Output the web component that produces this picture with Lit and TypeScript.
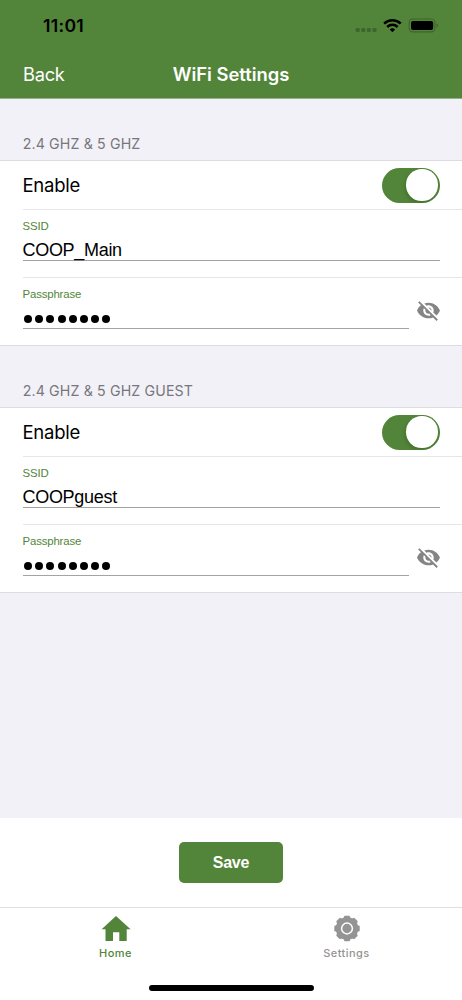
import { LitElement, html, svg, css } from "lit";
import { customElement, property } from "lit/decorators.js";

@customElement("wifi-group")
class WifiGroup extends LitElement {
  @property() heading = "";
  @property() ssid = "";

  static styles = css`
    :host { display: block; }
    .heading {
      box-sizing: border-box; height: 61px; padding: 34px 22.7px 0;
      font: 400 14.2px/22px Inter, sans-serif; letter-spacing: 0.13px; color: #77777c;
    }
    .card { background: #fff; border-top: 1px solid #dddde1; border-bottom: 1px solid #dddde1; padding-left: 22.5px; height: 184px; }
    .row { box-sizing: border-box; border-bottom: 1px solid #e6e6e8; padding-right: 22.5px; }
    .enable { height: 49px; display: flex; align-items: center; justify-content: space-between; }
    .name { font: 400 18.5px/24px Inter, sans-serif; letter-spacing: -0.25px; color: #000; }
    .toggle {
      box-sizing: border-box; width: 57.5px; height: 35px; border-radius: 18px; background: #528539;
      padding: 1.75px; display: flex; justify-content: flex-end; overflow: hidden;
    }
    .knob { width: 31.5px; height: 31.5px; border-radius: 50%; background: #fff; box-shadow: -1px 2px 4px rgba(0,0,0,.16); }
    .field { height: 68px; padding-top: 9px; display: flex; }
    .last { border-bottom: 0; }
    .input { flex: 1; height: 41px; border-bottom: 1px solid #a3a3a5; }
    .label { font: 400 11.4px/14px "Liberation Sans", Arial, sans-serif; letter-spacing: -0.15px; color: #528539; }
    .value { font: 400 18px/24px "Liberation Sans", Arial, sans-serif; letter-spacing: -0.3px; color: #000; margin-top: 5px; white-space: nowrap; }
    .dots { display: flex; gap: 3.1px; padding: 13.5px 0 0 1.5px; }
    .dot { width: 8.1px; height: 8.1px; border-radius: 50%; background: #000; }
    .eye { width: 31px; padding: 11.3px 0 0 7.1px; box-sizing: border-box; }
    .eye svg { display: block; width: 25px; height: 25px; }
  `;

  render() {
    return html`
      <div class="heading">${this.heading}</div>
      <div class="card">
        <div class="row enable">
          <span class="name">Enable</span>
          <div class="toggle"><div class="knob"></div></div>
        </div>
        <div class="row field">
          <div class="input">
            <div class="label">SSID</div>
            <div class="value">${this.ssid}</div>
          </div>
        </div>
        <div class="row field last">
          <div class="input">
            <div class="label">Passphrase</div>
            <div class="dots">${Array.from({ length: 8 }, () => html`<div class="dot"></div>`)}</div>
          </div>
          <div class="eye">
            <svg viewBox="0 0 24 24" fill="#858585"><path d="M12 7c2.76 0 5 2.24 5 5 0 .65-.13 1.26-.36 1.83l2.92 2.92c1.51-1.26 2.7-2.89 3.43-4.75-1.73-4.39-6-7.5-11-7.5-1.4 0-2.74.25-3.98.7l2.16 2.16C10.74 7.13 11.35 7 12 7zM2 4.27l2.28 2.28.46.46C3.08 8.3 1.78 10.02 1 12c1.73 4.39 6 7.5 11 7.5 1.55 0 3.03-.3 4.38-.84l.42.42L19.73 22 21 20.73 3.27 3 2 4.27zM7.53 9.8l1.55 1.55c-.05.21-.08.43-.08.65 0 1.66 1.34 3 3 3 .22 0 .44-.03.65-.08l1.55 1.55c-.67.33-1.41.53-2.2.53-2.76 0-5-2.24-5-5 0-.79.2-1.53.53-2.2zm4.31-.78l3.15 3.15.02-.16c0-1.66-1.34-3-3-3l-.17.01z"/></svg>
          </div>
        </div>
      </div>
    `;
  }
}

@customElement("app-root")
class AppRoot extends LitElement {
  static styles = css`
    :host { display: flex; flex-direction: column; width: 462px; height: 1000px; background: #f2f1f7; overflow: hidden; }
    .top { box-sizing: border-box; height: 99px; background: #528539; border-bottom: 1px solid #98ad90; }
    .status { box-sizing: border-box; height: 50px; display: flex; justify-content: space-between; padding: 14px 23px 0 43px; }
    .time { font: 600 17.6px/24px Inter, sans-serif; letter-spacing: 0.3px; color: #000; }
    .status svg { display: block; width: 84px; height: 24px; }
    .nav { height: 48px; display: grid; grid-template-columns: 1fr auto 1fr; align-items: center; padding: 0 23px; color: #fff; }
    .back { font: 400 18.3px/24px Inter, sans-serif; letter-spacing: -0.3px; }
    .title { font: 600 18.4px/24px Inter, sans-serif; }
    .body { flex: 1; }
    .footer { height: 89px; background: #fff; display: flex; align-items: center; justify-content: center; }
    .save {
      width: 104px; height: 41px; border: 0; border-radius: 5px; padding: 1px 0 0; background: #528539; color: #fff;
      font: 700 16px/40px "Liberation Sans", Arial, sans-serif; letter-spacing: -0.2px;
    }
    .tabs { box-sizing: border-box; height: 76px; background: #fff; border-top: 1px solid #dfdfe1; display: flex; }
    .tab { flex: 1; display: flex; flex-direction: column; align-items: center; padding-top: 7px; color: #949494; font: 500 11px/14px Inter, sans-serif; letter-spacing: .45px; }
    .tab svg { display: block; width: 30px; height: 28px; margin-bottom: 3px; }
    .active { color: #528539; }
    .bottom { height: 17px; background: #fff; display: flex; justify-content: center; padding-top: 2px; box-sizing: border-box; }
    .bar { width: 165px; height: 6px; border-radius: 3px; background: #000; }
  `;

  render() {
    return html`
      <div class="top">
        <div class="status">
          <span class="time">11:01</span>
          <svg viewBox="0 0 84 24">
            <g fill="#3e652b">
              <rect x="0.7" y="14" width="4" height="4" rx="1.2"/><rect x="6.3" y="14" width="4" height="4" rx="1.2"/>
              <rect x="11.9" y="14" width="4" height="4" rx="1.2"/><rect x="17.5" y="14" width="4" height="4" rx="1.2"/>
            </g>
            <g fill="none" stroke="#000" stroke-width="2.5">
              <path d="M29.1 9.6a11.8 11.8 0 0 1 16.6 0"/><path d="M32.2 13a7.4 7.4 0 0 1 10.4 0"/>
            </g>
            <path d="M37.4 18.2l-2.7-2.7a3.9 3.9 0 0 1 5.4 0z"/>
            <rect x="54.2" y="5" width="25.8" height="12.9" rx="3.6" fill="none" stroke="#3e652b" stroke-width="1.1"/>
            <rect x="56" y="6.9" width="22.2" height="9.1" rx="2"/>
            <path d="M81.5 9.3q3 2.2 0 4.4z" fill="#3e652b"/>
          </svg>
        </div>
        <div class="nav"><span class="back">Back</span><span class="title">WiFi Settings</span></div>
      </div>
      <div class="body">
        <wifi-group heading="2.4 GHZ &amp; 5 GHZ" ssid="COOP_Main"></wifi-group>
        <wifi-group heading="2.4 GHZ &amp; 5 GHZ GUEST" ssid="COOPguest"></wifi-group>
      </div>
      <div class="footer"><button class="save">Save</button></div>
      <div class="tabs">
        <div class="tab active">
          <svg viewBox="0 0 30 28" fill="#528539"><path d="M15 1L29.6 14.3H25.7V26H18.3V17.2H12V26H4.5V14.3H0.6z"/></svg>
          <span>Home</span>
        </div>
        <div class="tab">
          <svg viewBox="0 0 30 28">
            <g fill="#949494" transform="translate(15 13.5)">
              <circle r="11.2"/>
              ${[0, 45, 90, 135].map((a) => svg`<path transform=${`rotate(${a})`} d="M-3.6 -10.3L-2.5 -12.7H2.5L3.6 -10.3V10.3L2.5 12.7H-2.5L-3.6 10.3z"/>`)}
            </g>
            <circle cx="15" cy="13.5" r="5.4" fill="#949494" stroke="#fff" stroke-width="1.5"/>
          </svg>
          <span>Settings</span>
        </div>
      </div>
      <div class="bottom"><div class="bar"></div></div>
    `;
  }
}
